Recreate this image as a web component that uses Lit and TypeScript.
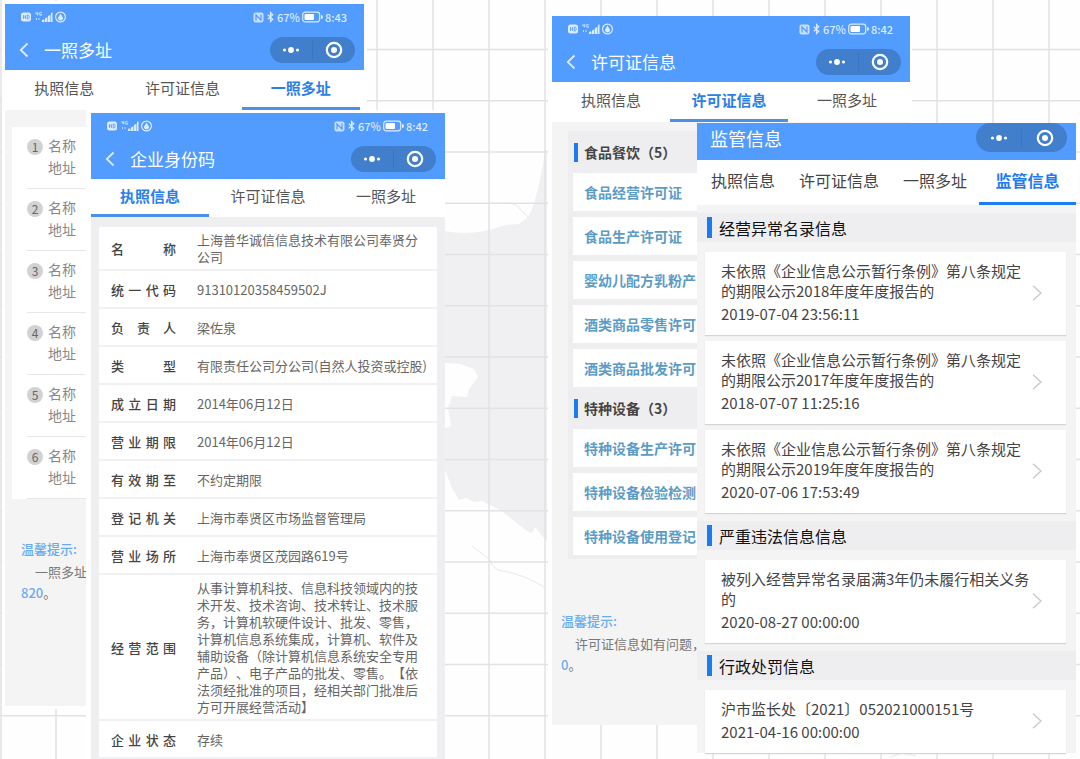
import { LitElement, html, css, svg } from "lit";
import { customElement, property } from "lit/decorators.js";
import { classMap } from "lit/directives/class-map.js";

const base = css`
  * {
    box-sizing: border-box;
  }
  button {
    font: inherit;
    color: inherit;
    background: none;
    border: 0;
    padding: 0;
    margin: 0;
    cursor: pointer;
  }
  a {
    color: inherit;
    text-decoration: none;
  }
  svg {
    display: block;
  }
`;

/** Rounded pill with the "more" and "close" actions of a mini program. */
@customElement("mini-capsule")
export class MiniCapsule extends LitElement {
  static styles = [
    base,
    css`
      :host {
        display: flex;
        align-items: center;
        width: 85px;
        height: 26px;
        border-radius: 15px;
        background: #417fcd;
        color: #fff;
      }
      :host([large]) {
        width: 91px;
        height: 29px;
      }
      button {
        flex: 1;
        height: 100%;
        display: flex;
        align-items: center;
        justify-content: center;
      }
      .split {
        width: 1px;
        height: 18px;
        background: #3a75be;
      }
    `,
  ];
  render() {
    return html`
      <button aria-label="更多">
        <svg width="20" height="8" viewBox="0 0 20 8" fill="currentColor">
          <circle cx="3.500" cy="4" r="1.600" />
          <circle cx="10" cy="4" r="2.900" />
          <circle cx="16.500" cy="4" r="1.600" />
        </svg>
      </button>
      <span class="split"></span>
      <button aria-label="关闭">
        <svg width="18" height="18" viewBox="0 0 18 18">
          <circle cx="9" cy="9" r="7.200" fill="none" stroke="currentColor" stroke-width="2.200" />
          <circle cx="9" cy="9" r="3" fill="currentColor" />
        </svg>
      </button>
    `;
  }
}

/** Blue header: system status line plus the title bar. */
@customElement("phone-header")
export class PhoneHeader extends LitElement {
  @property() heading = "";
  @property() time = "";

  static styles = [
    base,
    css`
      :host {
        display: block;
        background: #529bff;
        color: #fff;
      }
      .status {
        height: 26px;
        padding: 0 17px 0 16px;
        display: flex;
        align-items: center;
        justify-content: space-between;
        font-size: 11px;
        font-weight: 500;
        color: #dcebff;
      }
      .right {
        display: flex;
        align-items: center;
        gap: 2px;
      }
      .nav {
        height: 40px;
        padding: 0 9px 0 14px;
        display: flex;
        align-items: center;
      }
      h1 {
        flex: 1;
        margin: 0 0 0 15px;
        font-size: 17px;
        line-height: 24px;
        font-weight: 400;
      }
    `,
  ];
  render() {
    return html`
      <div class="status">
        <svg width="46" height="12" viewBox="0 0 46 12">
          <rect x="0" y="1.500" width="10" height="9" rx="2.500" fill="currentColor" />
          <path d="M2.500 4v4M4.600 4v4M2.500 6h2M6.200 4v4h.6q1.400 0 1.400-2t-1.400-2z" fill="none" stroke="#529bff" stroke-width=".8" />
          <path d="M15 1v2h2.200M16.800 1v3.400M20.600 1.400h-1.800v2.800h1.800v-1.400M15.500 7v2M18 7v2" fill="none" stroke="currentColor" stroke-width=".8" />
          <path d="M21 11V9l2-.8V11zM24 11V7.400l2-.8V11zM27 11V5l2-1v7zM30 11V2l1.500-.7V11z" fill="currentColor" />
          <path d="M20.500 11l10-8v8z" fill="currentColor" opacity=".45" />
          <circle cx="39.500" cy="6" r="4.900" fill="none" stroke="currentColor" stroke-width="1.200" />
          <path d="M39.500 2.600l2.400 3.800a2.500 2.500 0 1 1-4.800 0z" fill="currentColor" />
        </svg>
        <div class="right">
          <svg width="11" height="11" viewBox="0 0 11 11">
            <rect x=".5" y=".5" width="10" height="10" rx="2" fill="currentColor" opacity=".85" />
            <path d="M3 8.500V3l5 5V2.500" fill="none" stroke="#529bff" stroke-width="1.200" />
          </svg>
          <svg width="9" height="12" viewBox="0 0 10 12">
            <path d="M2 3.500l5.500 5L5 11V1l2.500 2.500-5.500 5" fill="none" stroke="currentColor" stroke-width="1.300" />
          </svg>
          <span>67%</span>
          <svg width="21" height="12" viewBox="0 0 21 12">
            <rect x=".7" y="1.200" width="17" height="9.600" rx="2.500" fill="none" stroke="currentColor" stroke-width="1.200" />
            <rect x="2.500" y="3" width="9.500" height="6" rx="1" fill="#fff" />
            <path d="M19 4q2 0 2 2t-2 2z" fill="currentColor" />
          </svg>
          <span>${this.time}</span>
        </div>
      </div>
      <div class="nav">
        <button aria-label="返回">
          <svg width="10" height="16" viewBox="0 0 10 16">
            <path d="M8.500 1.500L1.800 8l6.700 6.500" fill="none" stroke="#dcebff" stroke-width="1.800" />
          </svg>
        </button>
        <h1>${this.heading}</h1>
        <mini-capsule></mini-capsule>
      </div>
    `;
  }
}

@customElement("tab-strip")
export class TabStrip extends LitElement {
  @property({ type: Array }) items: string[] = [];
  @property({ type: Number }) active = 0;

  static styles = [
    base,
    css`
      :host {
        display: block;
        background: #fff;
      }
      .tabs {
        display: flex;
        height: 40px;
        font-size: 15px;
        line-height: 20px;
        color: #555;
      }
      button {
        flex: 1;
        height: 100%;
        padding-bottom: 1px;
        border-bottom: 3px solid transparent;
        white-space: nowrap;
      }
      .on {
        color: #2b80e8;
        font-weight: 700;
        border-bottom-color: #4a90ea;
      }
      :host([short]) .tabs {
        height: 38px;
      }
      :host([wide]) .tabs {
        height: 45px;
        padding-left: 2px;
        font-size: 16px;
        color: #444;
      }
      :host([wide]) button {
        flex: none;
        padding: 0 12px 2px;
      }
      :host([wide]) .on {
        flex: 1;
        color: #1f7cf0;
        border-bottom-color: #1f7cf0;
      }
    `,
  ];
  render() {
    return html`<div class="tabs" role="tablist">
      ${this.items.map(
        (t, i) =>
          html`<button role="tab" aria-selected=${i === this.active} class=${classMap({ on: i === this.active })}>${t}</button>`,
      )}
    </div>`;
  }
}

const TABS = ["执照信息", "许可证信息", "一照多址"];

const LICENCE: [string, string][] = [
  ["名称", "上海普华诚信信息技术有限公司奉贤分公司"],
  ["统一代码", "91310120358459502J"],
  ["负责人", "梁佐泉"],
  ["类型", "有限责任公司分公司(自然人投资或控股)"],
  ["成立日期", "2014年06月12日"],
  ["营业期限", "2014年06月12日"],
  ["有效期至", "不约定期限"],
  ["登记机关", "上海市奉贤区市场监督管理局"],
  ["营业场所", "上海市奉贤区茂园路619号"],
  [
    "经营范围",
    "从事计算机科技、信息科技领域内的技术开发、技术咨询、技术转让、技术服务，计算机软硬件设计、批发、零售，计算机信息系统集成，计算机、软件及辅助设备（除计算机信息系统安全专用产品）、电子产品的批发、零售。【依法须经批准的项目，经相关部门批准后方可开展经营活动】",
  ],
  ["企业状态", "存续"],
];

const PERMITS = [
  { title: "食品餐饮（5）", links: ["食品经营许可证", "食品生产许可证", "婴幼儿配方乳粉产", "酒类商品零售许可", "酒类商品批发许可"] },
  { title: "特种设备（3）", links: ["特种设备生产许可", "特种设备检验检测", "特种设备使用登记"] },
];

const RECORDS = [
  {
    title: "经营异常名录信息",
    cards: [
      ["未依照《企业信息公示暂行条例》第八条规定的期限公示2018年度年度报告的", "2019-07-04 23:56:11"],
      ["未依照《企业信息公示暂行条例》第八条规定的期限公示2017年度年度报告的", "2018-07-07 11:25:16"],
      ["未依照《企业信息公示暂行条例》第八条规定的期限公示2019年度年度报告的", "2020-07-06 17:53:49"],
    ],
  },
  { title: "严重违法信息信息", cards: [["被列入经营异常名录届满3年仍未履行相关义务的", "2020-08-27 00:00:00"]] },
  { title: "行政处罚信息", cards: [["沪市监长处〔2021〕052021000151号", "2021-04-16 00:00:00"]] },
];

@customElement("app-root")
export class AppRoot extends LitElement {
  static styles = [
    base,
    css`
      :host {
        display: block;
        font-family: "Noto Sans CJK SC", "Noto Sans", sans-serif;
        text-spacing-trim: space-all;
      }
      .stage {
        position: relative;
        height: 100vh;
        overflow: hidden;
        background: #fefefe;
        display: grid;
        align-items: start;
        grid-template-columns:
          [a] minmax(0, 5fr) [a1] minmax(0, 81fr) [b1] minmax(0, 278fr) [a2] minmax(0, 81fr)
          [b2] minmax(0, 107fr) [c1] minmax(0, 145fr) [d1] minmax(0, 213fr) [c2] minmax(0, 166fr)
          [d2] minmax(0, 4fr);
      }
      .map {
        position: absolute;
        inset: 0;
        width: 100%;
        height: 100%;
      }
      .phone {
        grid-row: 1;
        position: relative;
      }
      .sites {
        grid-column: a1 / a2;
        margin-top: 4px;
        background: #f4f4f4;
        box-shadow: 0 0 0 3px #fff;
      }
      .sites tab-strip,
      .permits tab-strip {
        padding-right: 4px;
      }
      .licence {
        grid-column: b1 / b2;
        margin-top: 110px;
        border: solid #fff;
        border-width: 3px 0 0 5px;
        background: #efeff1;
      }
      .permits {
        grid-column: c1 / c2;
        margin-top: 16px;
        background: #f4f4f4;
        box-shadow: -4px 0 0 #fff, 2px 0 0 #fff;
      }
      .watch {
        grid-column: d1 / d2;
        margin-top: 123px;
        background: #f4f4f5;
      }

      .list {
        list-style: none;
        margin: 17px 0 0 7px;
        padding: 0 0 0 15px;
        background: #fff;
        font-size: 14px;
        line-height: 22px;
        color: #888;
      }
      .list li {
        display: flex;
        gap: 5px;
        padding: 7px 0 10px;
        border-bottom: 1px solid #e6e6e6;
      }
      .num {
        width: 16px;
        height: 16px;
        margin-top: 5px;
        border-radius: 50%;
        background: #d2d2d2;
        color: #666;
        font-size: 12px;
        line-height: 16px;
        text-align: center;
      }
      .tip {
        margin: 0;
        font-size: 13px;
        line-height: 21px;
        color: #777;
        white-space: nowrap;
      }
      .tip strong,
      .tip a {
        color: #6aabf0;
        font-weight: 500;
      }
      .tip p {
        margin: 2px 0 0;
        text-indent: 14px;
      }
      .sites .tip {
        padding: 39px 0 103px 16px;
      }
      .permits .tip {
        padding: 51px 0 50px 9px;
      }

      .sheet {
        padding: 10px 8px;
      }
      table {
        width: 100%;
        border-collapse: separate;
        border-spacing: 0;
        background: #fff;
        font-size: 13px;
        line-height: 17px;
        color: #666;
      }
      th,
      td {
        height: 38px;
        border-bottom: 2px solid #f1f1f3;
        text-align: left;
        vertical-align: middle;
      }
      th {
        width: 98px;
        padding: 0 21px 0 12px;
        font-weight: 500;
        color: #444;
        text-align-last: justify;
      }
      td {
        padding: 4px 8px 4px 0;
      }

      .group {
        position: relative;
        margin-left: 16px;
        background: #eeeef0;
        padding: 0 0 4px 5px;
      }
      .body {
        padding-top: 9px;
      }
      h2 {
        margin: 0;
        display: flex;
        align-items: center;
        font-weight: 700;
      }
      h2::before {
        content: "";
        background: #1a7cf0;
      }
      .group h2 {
        height: 42px;
        padding-left: 1px;
        gap: 6px;
        font-size: 14px;
        color: #444;
      }
      .group h2::before {
        width: 4px;
        height: 19px;
      }
      .links {
        display: grid;
        gap: 6px;
      }
      .links a {
        height: 38px;
        padding-left: 11px;
        background: #fff;
        font-size: 14px;
        line-height: 38px;
        font-weight: 700;
        color: #5b9cc6;
        white-space: nowrap;
      }

      .bar {
        height: 37px;
        padding: 0 9px 0 13px;
        display: flex;
        justify-content: space-between;
        background: #529bff;
        color: #fff;
      }
      .bar h1 {
        margin: 0;
        font-size: 18px;
        line-height: 30px;
        font-weight: 400;
      }
      .watch h2 {
        height: 29px;
        margin: 8px 0 10px;
        padding-left: 10px;
        gap: 7px;
        background: #eeeef1;
        font-size: 16px;
        line-height: 26px;
        font-weight: 400;
        color: #111;
      }
      .watch h2::before {
        width: 5px;
        height: 21px;
      }
      .cards {
        display: grid;
        gap: 6px;
        padding: 0 10px 0 8px;
      }
      .card {
        display: flex;
        align-items: center;
        justify-content: space-between;
        padding: 9px 24px 11px 16px;
        background: #fff;
        box-shadow: 0 1px 1px #d4d4d6;
        font-size: 15px;
        line-height: 20px;
        color: #444;
      }
      .card p {
        margin: 0 0 3px;
      }
      .card svg {
        flex: none;
      }
      .text {
        flex: 0 1 310px;
      }
    `,
  ];

  private map() {
    const xs = [1, 56, ...Array.from({ length: 13 }, (_, i) => 377 + i * 56)];
    const ys = Array.from({ length: 14 }, (_, i) => 49.500 + i * 51.250);
    return html`<svg class="map" viewBox="0 0 1080 759" preserveAspectRatio="xMinYMin slice" aria-hidden="true">
      <path
        fill="#f0f0f2"
        d="M445 231q28 6 60-6l14-1 10-8q10-22 16-66h2v392l-12-15-3 6-5-2-27-21-18-9-8 1-8-4-7 2-7-12-7-18v-42l6-2-3-18 4-12 15 1 2-8 9-12-4-8-14-5-15-1z"
      />
      <path d="M500 203q17-1 20 6l9 9M472 546l18 14q4 11 13 11 20 3 43 17M890 757l12-4 14 3" fill="none" stroke="#e8e8ea" />
      <g stroke="#e3e1e4" stroke-width="1.500">
        ${xs.map((x) => svg`<path d="M${x} 0V759" />`)} ${ys.map((y) => svg`<path d="M0 ${y}H1080" />`)}
      </g>
    </svg>`;
  }

  render() {
    return html`
      <main class="stage">
        ${this.map()}

        <section class="phone sites">
          <phone-header heading="一照多址" time="8:43"></phone-header>
          <tab-strip .items=${TABS} .active=${2}></tab-strip>
          <ol class="list">
            ${[1, 2, 3, 4, 5, 6].map((n) => html`<li><span class="num">${n}</span><div>名称<br />地址</div></li>`)}
          </ol>
          <div class="tip"><strong>温馨提示:</strong><p>一照多址</p><a href="#">820</a>。</div>
        </section>

        <section class="phone licence">
          <phone-header heading="企业身份码" time="8:42"></phone-header>
          <tab-strip short .items=${TABS} .active=${0}></tab-strip>
          <div class="sheet">
            <table>
              ${LICENCE.map(([k, v]) => html`<tr><th scope="row">${k}</th><td>${v}</td></tr>`)}
            </table>
          </div>
        </section>

        <section class="phone permits">
          <phone-header heading="许可证信息" time="8:42"></phone-header>
          <tab-strip .items=${TABS} .active=${1}></tab-strip>
          <div class="body">
            <div class="group">
              ${PERMITS.map(
                (g) => html`<h2>${g.title}</h2>
                  <div class="links">${g.links.map((l) => html`<a href="#">${l}</a>`)}</div>`,
              )}
            </div>
          </div>
          <div class="tip"><strong>温馨提示:</strong><p>许可证信息如有问题，</p><a href="#">0</a>。</div>
        </section>

        <section class="phone watch">
          <div class="bar">
            <h1>监管信息</h1>
            <mini-capsule large></mini-capsule>
          </div>
          <tab-strip wide .items=${[...TABS, "监管信息"]} .active=${3}></tab-strip>
          ${RECORDS.map(
            (r) => html`<h2>${r.title}</h2>
              <div class="cards">
                ${r.cards.map(
                  ([t, d]) => html`<a class="card" href="#">
                    <div class="text"><p>${t}</p><time>${d}</time></div>
                    <svg width="10" height="16" viewBox="0 0 10 16">
                      <path d="M1 .8L9 8l-8 7.200" fill="none" stroke="#c8c8c8" stroke-width="1.300" />
                    </svg>
                  </a>`,
                )}
              </div>`,
          )}
        </section>
      </main>
    `;
  }
}
